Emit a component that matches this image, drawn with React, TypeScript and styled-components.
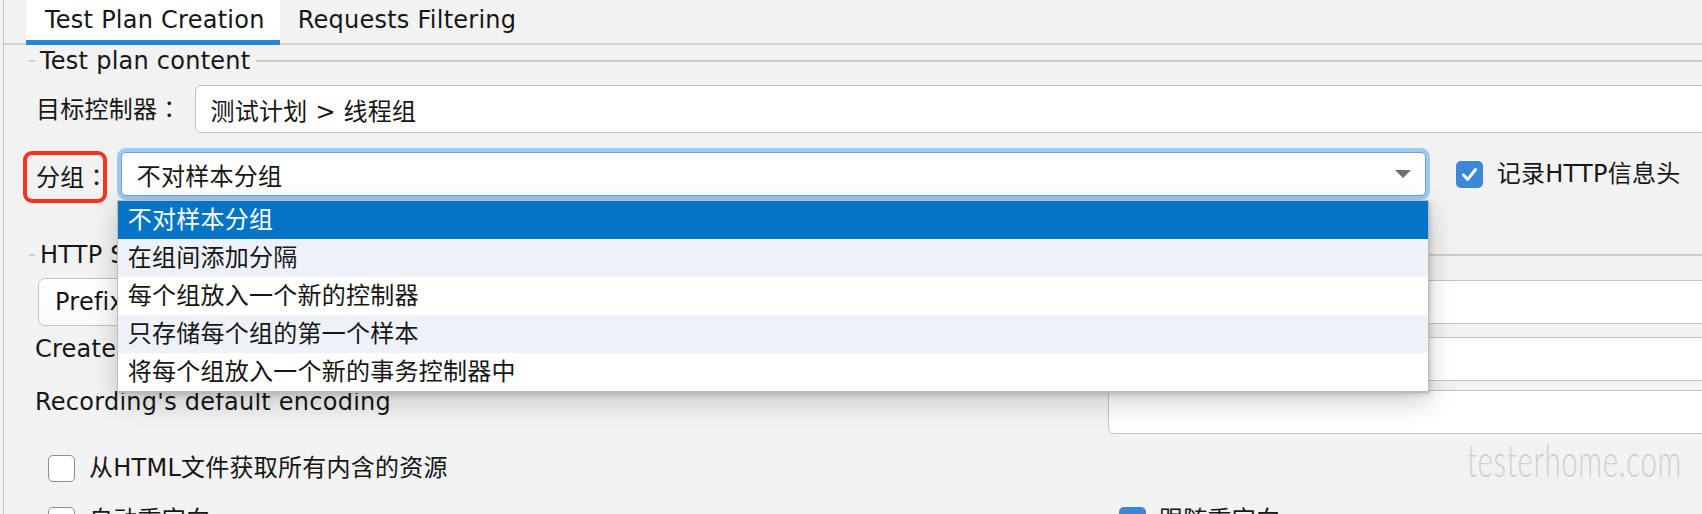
import React from "react";
import styled, { createGlobalStyle } from "styled-components";

const GlobalStyle = createGlobalStyle`
  html, body {
    margin: 0;
    padding: 0;
  }
  body {
    background: #f2f2f2;
    width: 1702px;
    height: 514px;
    overflow: hidden;
    font-family: "DejaVu Sans", "Noto Sans CJK SC", sans-serif;
    font-size: 24px;
    letter-spacing: 0.25px;
    color: #161616;
  }
`;

const Frame = styled.div`
  position: relative;
  height: 514px;
  padding-left: 3px;
  overflow: hidden;
`;

const Panel = styled.div`
  width: 1740px;
  height: 514px;
  border-left: 1px solid #c6c6c6;
`;

const TabBar = styled.div`
  display: flex;
  height: 45px;
  padding-left: 22px;
  box-shadow: inset 0 -2px 0 #d2d2d2;
`;

const Tab = styled.div<{ $active?: boolean }>`
  box-sizing: border-box;
  height: 45px;
  line-height: 40px;
  white-space: nowrap;
  padding: ${(p) => (p.$active ? "0 15px 0 19px" : "0 18px")};
  background: ${(p) => (p.$active ? "#ffffff" : "transparent")};
  border-bottom: 5px solid ${(p) => (p.$active ? "#2b84d1" : "transparent")};
`;

const Content = styled.div`
  padding-left: 25px;
`;

const GroupHead = styled.div<{ $gap?: number }>`
  display: flex;
  align-items: center;
  height: 32px;
  margin-top: ${(p) => p.$gap ?? 0}px;
`;

const Stub = styled.div`
  width: 6px;
  height: 2px;
  background: #cdcdcd;
`;

const GroupTitle = styled.div`
  padding: 0 6px 0 5px;
  white-space: nowrap;
`;

const GroupLine = styled.div`
  flex: 1;
  height: 2px;
  background: #cdcdcd;
`;

const Row = styled.div<{ $top: number; $left: number; $align?: string }>`
  display: flex;
  align-items: ${(p) => p.$align ?? "center"};
  margin-top: ${(p) => p.$top}px;
  padding-left: ${(p) => p.$left}px;
`;

const Label = styled.div<{ $gap?: number }>`
  white-space: nowrap;
  line-height: 24px;
  margin-right: ${(p) => p.$gap ?? 13}px;
`;

/* centred full-width colon, as the macOS font draws it */
const Colon = styled.span`
  font-family: "Noto Sans CJK TC", "Noto Sans CJK JP", sans-serif;
`;

const MarkedLabel = styled(Label)`
  position: relative;
  line-height: 30px;
  margin-top: 6px;
  &::after {
    content: "";
    position: absolute;
    left: -13px;
    right: 2px;
    top: -10px;
    bottom: -10px;
    border: 4px solid #f6331c;
    border-radius: 9px;
  }
`;

const TextField = styled.div<{ $h: number; $w?: number }>`
  box-sizing: border-box;
  flex: ${(p) => (p.$w ? "none" : "1")};
  width: ${(p) => (p.$w ? `${p.$w}px` : "auto")};
  margin-left: ${(p) => (p.$w ? "auto" : "0")};
  height: ${(p) => p.$h}px;
  display: flex;
  align-items: center;
  padding-left: 15px;
  background: #ffffff;
  border: 1.5px solid #c3c3c3;
  border-radius: 6px;
`;

const ComboWrap = styled.div`
  position: relative;
  width: 1305px;
`;

const Combo = styled.div`
  box-sizing: border-box;
  height: 44px;
  display: flex;
  align-items: center;
  justify-content: space-between;
  padding: 0 14px 0 15px;
  background: #ffffff;
  border: 1px solid #6d9fd6;
  border-radius: 5px;
  box-shadow: 0 0 0 4px #9fc9f4;
`;

const PrefixCombo = styled.div`
  box-sizing: border-box;
  width: 260px;
  height: 48px;
  display: flex;
  align-items: center;
  padding-left: 16px;
  margin-right: 10px;
  background: linear-gradient(#ffffff, #fafafa);
  border: 1.5px solid #c3c3c3;
  border-radius: 7px;
`;

const Popup = styled.div`
  position: absolute;
  z-index: 10;
  left: -4px;
  top: calc(100% + 4px);
  width: 1312px;
  box-sizing: border-box;
  background: #ffffff;
  border: 1px solid #bcbcbc;
  border-bottom-width: 2px;
  box-shadow: 0 8px 26px rgba(0, 0, 0, 0.2), 2px 2px 4px rgba(0, 0, 0, 0.12);
`;

const Option = styled.div<{ $selected?: boolean; $alt?: boolean }>`
  height: 38px;
  line-height: 38px;
  padding-left: 10px;
  white-space: nowrap;
  color: ${(p) => (p.$selected ? "#ffffff" : "#161616")};
  background: ${(p) => (p.$selected ? "#0475c4" : p.$alt ? "#eef2f8" : "#ffffff")};
`;

const Check = styled.div<{ $on?: boolean }>`
  box-sizing: border-box;
  flex: none;
  width: 27px;
  height: 27px;
  display: flex;
  align-items: center;
  justify-content: center;
  border-radius: 5px;
  background: ${(p) => (p.$on ? "#3b88d8" : "#ffffff")};
  border: ${(p) => (p.$on ? "none" : "1.5px solid #8f8f8f")};
`;

const CheckItem = styled.div<{ $gap?: number; $left?: number }>`
  display: flex;
  align-items: center;
  gap: ${(p) => p.$gap ?? 14}px;
  margin-left: ${(p) => p.$left ?? 0}px;
  white-space: nowrap;
  line-height: 27px;
`;

const CheckGrid = styled.div<{ $top: number }>`
  display: grid;
  grid-template-columns: 1071px 1fr;
  margin-top: ${(p) => p.$top}px;
  padding-left: 19px;
`;

const Watermark = styled.div`
  position: absolute;
  right: 20px;
  top: 432px;
  font-family: "Lato", sans-serif;
  font-weight: 300;
  font-size: 46px;
  letter-spacing: 1px;
  color: #cfcfcf;
  transform: scaleX(0.64);
  transform-origin: right center;
  pointer-events: none;
`;

const Arrow = () => (
  <svg width="16" height="8" viewBox="0 0 16 8">
    <path d="M0 0h16L8 8z" fill="#6f6f6f" />
  </svg>
);

const Tick = () => (
  <svg width="27" height="27" viewBox="0 0 27 27">
    <path
      d="M7.5 14l4.2 4.4L19.5 8.5"
      fill="none"
      stroke="#ffffff"
      strokeWidth="3"
      strokeLinecap="round"
      strokeLinejoin="round"
    />
  </svg>
);

const options = [
  "不对样本分组",
  "在组间添加分隔",
  "每个组放入一个新的控制器",
  "只存储每个组的第一个样本",
  "将每个组放入一个新的事务控制器中",
];

export default function App() {
  return (
    <Frame>
      <GlobalStyle />
      <Panel>
        <TabBar>
          <Tab $active>Test Plan Creation</Tab>
          <Tab>Requests Filtering</Tab>
        </TabBar>
        <Content>
          <GroupHead>
            <Stub />
            <GroupTitle>Test plan content</GroupTitle>
            <GroupLine />
          </GroupHead>

          <Row $top={8} $left={7}>
            <Label>
              目标控制器<Colon>：</Colon>
            </Label>
            <TextField $h={48}>测试计划 &gt; 线程组</TextField>
          </Row>

          <Row $top={19} $left={7}>
            <MarkedLabel $gap={12}>
              分组<Colon>：</Colon>
            </MarkedLabel>
            <ComboWrap>
              <Combo>
                <span>不对样本分组</span>
                <Arrow />
              </Combo>
              <Popup>
                {options.map((o, i) => (
                  <Option key={o} $selected={i === 0} $alt={i % 2 === 1}>
                    {o}
                  </Option>
                ))}
              </Popup>
            </ComboWrap>
            <CheckItem $left={30}>
              <Check $on>
                <Tick />
              </Check>
              记录HTTP信息头
            </CheckItem>
          </Row>

          <GroupHead $gap={43}>
            <Stub />
            <GroupTitle>HTTP Sampler settings</GroupTitle>
            <GroupLine />
          </GroupHead>

          <Row $top={7} $left={9}>
            <PrefixCombo>Prefix</PrefixCombo>
            <TextField $h={44} />
          </Row>

          <Row $top={11} $left={6} $align="flex-start">
            <Label $gap={14}>Create new transaction after request (ms):</Label>
            <TextField $h={44} />
          </Row>

          <Row $top={9} $left={6} $align="flex-start">
            <Label>Recording's default encoding</Label>
            <TextField $h={44} $w={636} />
          </Row>

          <CheckGrid $top={21}>
            <CheckItem>
              <Check />
              从HTML文件获取所有内含的资源
            </CheckItem>
          </CheckGrid>

          <CheckGrid $top={25}>
            <CheckItem>
              <Check />
              自动重定向
            </CheckItem>
            <CheckItem $gap={13}>
              <Check $on>
                <Tick />
              </Check>
              跟随重定向
            </CheckItem>
          </CheckGrid>
        </Content>
      </Panel>
      <Watermark>testerhome.com</Watermark>
    </Frame>
  );
}
